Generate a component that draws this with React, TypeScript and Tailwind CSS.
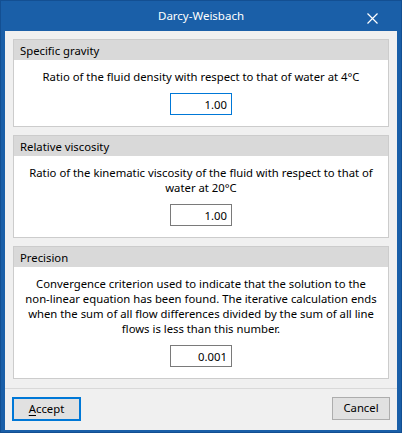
import React from 'react'

const font = { fontFamily: '"Noto Sans", "Open Sans", Arial, sans-serif' }

function Group({ title, lines, value, focused }: { title: string; lines: string[]; value: string; focused?: boolean }) {
  return (
    <div className="border border-[#cccccc] bg-white">
      <div className="flex h-[20px] items-center bg-[#d9d9d9] pl-[6px] text-[11.3px] leading-[15px] text-black">{title}</div>
      <div className="flex flex-col items-center pt-[9px] pb-[11px]">
        <div className="text-center text-[11.3px] leading-[15px] text-black">
          {lines.map((l) => (
            <div key={l} className="whitespace-nowrap">{l}</div>
          ))}
        </div>
        <div
          className={`mt-[9px] flex h-[22px] w-[62px] items-center justify-end pr-[4px] text-[11.3px] leading-[15px] text-black ${
            focused ? 'border border-[#0078d7]' : 'border border-[#7a7a7a]'
          }`}
        >
          {value}
        </div>
      </div>
    </div>
  )
}

export default function App() {
  return (
    <div style={font} className="h-[433px] w-[402px] border border-[#134f92] bg-[#1a5fa8]">
      <div className="relative flex h-[30px] items-center justify-center pb-[1px] text-[11.5px] text-white">
        Darcy-Weisbach
        <svg className="absolute right-[23px] top-[12px]" width="11" height="11" viewBox="0 0 11 11">
          <path d="M0.5 0.5 L10.5 10.5 M10.5 0.5 L0.5 10.5" stroke="white" strokeWidth="1.2" />
        </svg>
      </div>
      <div className="mx-[4px] flex h-[399px] flex-col bg-[#f0f0f0]">
        <div className="flex flex-col gap-[8px] px-[8px] pt-[8px]">
          <Group
            title="Specific gravity"
            lines={['Ratio of the fluid density with respect to that of water at 4°C']}
            value="1.00"
            focused
          />
          <Group
            title="Relative viscosity"
            lines={['Ratio of the kinematic viscosity of the fluid with respect to that of', 'water at 20°C']}
            value="1.00"
          />
          <Group
            title="Precision"
            lines={[
              'Convergence criterion used to indicate that the solution to the',
              'non-linear equation has been found. The iterative calculation ends',
              'when the sum of all flow differences divided by the sum of all line',
              'flows is less than this number.',
            ]}
            value="0.001"
          />
        </div>
        <div className="mt-[9px] flex flex-1 items-start justify-between border-t border-[#d9d9d9] px-[7px] pt-[8px]">
          <button className="flex h-[24px] w-[69px] items-center justify-center border-2 border-[#0078d7] bg-[#e1e1e1] text-[11.3px] text-black">
            <span className="underline underline-offset-2">A</span>ccept
          </button>
          <button className="flex h-[23px] w-[58px] items-center justify-center border border-[#adadad] bg-[#e1e1e1] text-[11.3px] text-black">
            Cancel
          </button>
        </div>
      </div>
    </div>
  )
}
